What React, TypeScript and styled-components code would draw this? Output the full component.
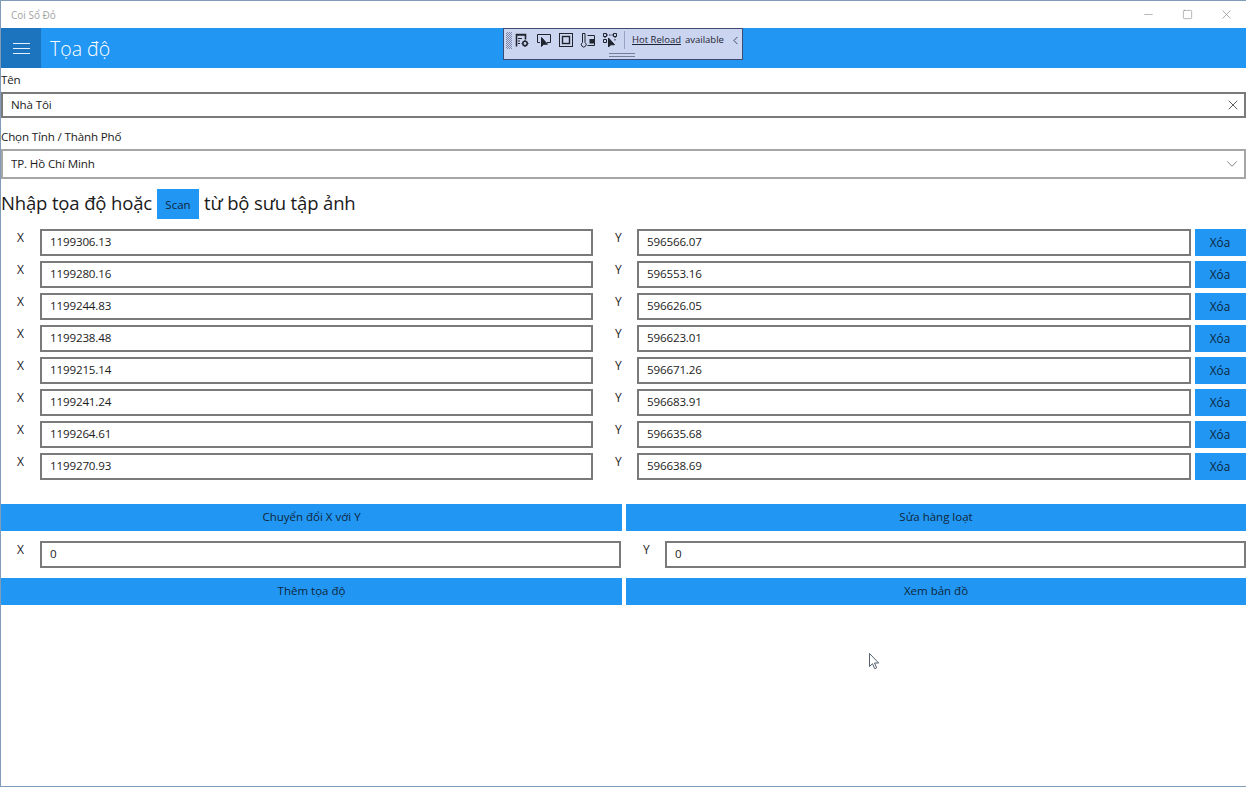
import { createGlobalStyle } from "styled-components";
import styled from "styled-components";
import { X, ChevronDown, ChevronLeft, Minus, Square } from "lucide-react";

const GlobalStyle = createGlobalStyle`
  html, body {
    margin: 0;
    padding: 0;
    background: #fff;
  }
  body {
    font-family: "Open Sans", "Noto Sans", sans-serif;
    color: #1a1a1a;
    overflow: hidden;
  }
`

const Window = styled.div`
  position: relative;
  box-sizing: border-box;
  width: 1246px;
  height: 787px;
  border-left: 1px solid #7f9db9;
  border-top: 1px solid #7f9db9;
  border-bottom: 1px solid #7f9db9;
  background: #fff;
  overflow: hidden;
`

const TitleBar = styled.div`
  display: flex;
  align-items: center;
  justify-content: space-between;
  height: 27px;
`

const TitleText = styled.span`
  font-size: 10px;
  color: #a3a3a3;
  padding-left: 10px;
`

const WindowControls = styled.div`
  display: flex;
  align-items: center;
  color: #7d7d7d;
`

const WindowControl = styled.div`
  display: flex;
  align-items: center;
  justify-content: center;
  width: 39px;
  height: 27px;
`

const Header = styled.header`
  display: flex;
  align-items: stretch;
  height: 40px;
  background: #2196f3;
`

const MenuButton = styled.div`
  display: flex;
  flex-direction: column;
  align-items: center;
  justify-content: center;
  gap: 4px;
  width: 40px;
  background: #1b74bd;
`

const MenuLine = styled.span`
  display: block;
  width: 17px;
  height: 1px;
  background: #e4f1fc;
`

const PageTitle = styled.h1`
  margin: 0;
  padding-left: 9px;
  font-size: 19.5px;
  font-weight: 300;
  line-height: 42px;
  color: #fff;
`

const Content = styled.main`
  display: flex;
  flex-direction: column;
`

const FieldLabel = styled.label<{ $top: number }>`
  display: block;
  height: 15px;
  margin-top: ${(p) => p.$top}px;
  font-size: 11.6px;
  letter-spacing: -0.15px;
  line-height: 16px;
  color: #1c1c1c;
`

const FieldBox = styled.div<{ $height: number; $light?: boolean }>`
  box-sizing: border-box;
  display: flex;
  align-items: center;
  justify-content: space-between;
  height: ${(p) => p.$height}px;
  margin-top: 5px;
  padding: 0 3px 0 8px;
  border: 2px solid ${(p) => (p.$light ? "#a6a6a6" : "#7a7a7a")};
  font-size: 11.6px;
  letter-spacing: -0.15px;
  color: #1c1c1c;
`

const BareInput = styled.input`
  flex: 1;
  min-width: 0;
  padding: 0 0 2px;
  border: 0;
  outline: 0;
  background: none;
  font: inherit;
  letter-spacing: inherit;
  color: inherit;
`

const ScanLine = styled.div`
  display: flex;
  align-items: flex-start;
  gap: 4px;
  height: 30px;
  margin-top: 10px;
  font-size: 18.5px;
  letter-spacing: -0.15px;
  line-height: 28px;
  color: #1a1a1a;
`

const ScanButton = styled.button`
  width: 42px;
  height: 30px;
  margin: 0 1px;
  padding: 0;
  border: 0;
  background: #2196f3;
  font-family: inherit;
  font-size: 11.5px;
  letter-spacing: 0;
  color: #10263a;
`

const CoordList = styled.div`
  display: flex;
  flex-direction: column;
  gap: 5px;
  margin-top: 10px;
`

const CoordRow = styled.div`
  display: grid;
  grid-template-columns: 39px 553px 44px 554px 51px;
  height: 27px;
`

const AxisLabel = styled.span`
  margin-top: 1px;
  padding-left: 16px;
  font-size: 12px;
  line-height: 16px;
  color: #1c1c1c;
`

const AxisLabelY = styled(AxisLabel)`
  padding-left: 22px;
`

const ValueInput = styled.input`
  box-sizing: border-box;
  width: 100%;
  height: 27px;
  padding: 0 8px 3px;
  border: 2px solid #7a7a7a;
  outline: 0;
  border-radius: 0;
  background: #fff;
  font-family: inherit;
  font-size: 11.6px;
  letter-spacing: -0.15px;
  color: #1c1c1c;
`

const DeleteButton = styled.button`
  width: 51px;
  height: 27px;
  margin-left: 4px;
  padding: 0 1px 2px 0;
  border: 0;
  background: #2196f3;
  font-family: inherit;
  font-size: 11.8px;
  color: #10263a;
`

const ActionRow = styled.div<{ $top: number }>`
  display: grid;
  grid-template-columns: 621px 620px;
  column-gap: 4px;
  margin-top: ${(p) => p.$top}px;
`

const ActionButton = styled.button`
  height: 27px;
  padding: 0 0 2px;
  border: 0;
  background: #2196f3;
  font-family: inherit;
  font-size: 11.5px;
  color: #10263a;
`

const SingleRow = styled.div`
  display: grid;
  grid-template-columns: 39px 581px 44px 581px;
  height: 27px;
  margin-top: 10px;
`

const ReloadBar = styled.div`
  position: absolute;
  top: 27px;
  left: 502px;
  box-sizing: border-box;
  display: flex;
  align-items: flex-start;
  width: 240px;
  height: 32px;
  padding: 2px 0 0 2px;
  border: 1px solid #3d4a74;
  background: #ccd5f0;
  color: #1e2433;
`

const Gripper = styled.span`
  flex: none;
  width: 6px;
  height: 17px;
  margin: 1px 2px 0 0;
  background: repeating-conic-gradient(#7f88a8 0 25%, transparent 0 50%) 0 0 / 2px 2px;
`

const BarIcon = styled.svg`
  flex: none;
  width: 16px;
  height: 16px;
  margin: 1px 6px 0 0;
  fill: none;
  stroke: #20242f;
  stroke-width: 1;
`

const BarSeparator = styled.span`
  flex: none;
  width: 1px;
  height: 18px;
  margin: 0 7px 0 0;
  background: #98a2c2;
`

const ReloadText = styled.span`
  font-size: 9.5px;
  line-height: 18px;
  white-space: nowrap;
  color: #1e2433;
`

const ReloadLink = styled.span`
  margin-right: 4px;
  text-decoration: underline;
`

const Collapse = styled.span`
  display: flex;
  margin: 3px 0 0 5px;
`

const BarHandle = styled.span`
  position: absolute;
  left: 105px;
  bottom: 2px;
  width: 26px;
  height: 2px;
  border-top: 1px solid #747d9e;
  border-bottom: 1px solid #747d9e;
`

const Pointer = styled.svg`
  position: absolute;
  left: 867px;
  top: 651px;
  width: 13px;
  height: 19px;
`

const rows = [
  ["1199306.13", "596566.07"],
  ["1199280.16", "596553.16"],
  ["1199244.83", "596626.05"],
  ["1199238.48", "596623.01"],
  ["1199215.14", "596671.26"],
  ["1199241.24", "596683.91"],
  ["1199264.61", "596635.68"],
  ["1199270.93", "596638.69"],
];

const App = () => {
  return (
    <Window>
      <GlobalStyle />
      <TitleBar>
        <TitleText>Coi Sổ Đỏ</TitleText>
        <WindowControls>
          <WindowControl><Minus size={13} strokeWidth={1} /></WindowControl>
          <WindowControl><Square size={11} strokeWidth={1.2} /></WindowControl>
          <WindowControl><X size={15} strokeWidth={1} /></WindowControl>
        </WindowControls>
      </TitleBar>
      <Header>
        <MenuButton>
          <MenuLine />
          <MenuLine />
          <MenuLine />
        </MenuButton>
        <PageTitle>Tọa độ</PageTitle>
      </Header>
      <Content>
        <FieldLabel $top={4}>Tên</FieldLabel>
        <FieldBox $height={26}>
          <BareInput readOnly value="Nhà Tôi" />
          <X size={16} strokeWidth={1.2} color="#333" />
        </FieldBox>
        <FieldLabel $top={11}>Chọn Tỉnh / Thành Phố</FieldLabel>
        <FieldBox $height={30} $light>
          <BareInput readOnly value="TP. Hồ Chí Minh" />
          <ChevronDown size={18} strokeWidth={1} color="#555" />
        </FieldBox>
        <ScanLine>
          Nhập tọa độ hoặc
          <ScanButton>Scan</ScanButton>
          từ bộ sưu tập ảnh
        </ScanLine>
        <CoordList>
          {rows.map(([x, y]) => (
            <CoordRow key={x}>
              <AxisLabel>X</AxisLabel>
              <ValueInput readOnly value={x} />
              <AxisLabelY>Y</AxisLabelY>
              <ValueInput readOnly value={y} />
              <DeleteButton>Xóa</DeleteButton>
            </CoordRow>
          ))}
        </CoordList>
        <ActionRow $top={24}>
          <ActionButton>Chuyển đổi X với Y</ActionButton>
          <ActionButton>Sửa hàng loạt</ActionButton>
        </ActionRow>
        <SingleRow>
          <AxisLabel>X</AxisLabel>
          <ValueInput readOnly value="0" />
          <AxisLabelY>Y</AxisLabelY>
          <ValueInput readOnly value="0" />
        </SingleRow>
        <ActionRow $top={10}>
          <ActionButton>Thêm tọa độ</ActionButton>
          <ActionButton>Xem bản đồ</ActionButton>
        </ActionRow>
      </Content>
      <ReloadBar>
        <Gripper />
        <BarIcon viewBox="0 0 16 16">
          <path d="M2.5 14.5v-12h9v5M2 3h10" strokeWidth="1.6" />
          <path d="M4 6.5h4M4 9h2M4 11.5h2" />
          <circle cx="11" cy="11.5" r="2.2" strokeWidth="1.6" />
          <path d="M11 8v1M11 14v1M7.5 11.5h1M13.5 11.5h1" />
        </BarIcon>
        <BarIcon viewBox="0 0 16 16">
          <path d="M4 10.5H1.5v-8h13v8H11" />
          <path d="M5.5 5.5v9l2.2-2.2 3.8-.1z" fill="#20242f" />
        </BarIcon>
        <BarIcon viewBox="0 0 16 16">
          <rect x="1.5" y="1.5" width="13" height="13" />
          <rect x="4.5" y="4.5" width="7" height="7" strokeWidth="1.4" />
        </BarIcon>
        <BarIcon viewBox="0 0 16 16">
          <path d="M2.5 1.5h2.5v9a2.4 2.4 0 1 1-2.5 0z" />
          <path d="M7.5 3.5h7v10h-7" />
          <rect x="10" y="7.5" width="3.5" height="3.5" fill="#20242f" />
        </BarIcon>
        <BarIcon viewBox="0 0 16 16">
          <path d="M1.5 1.5h3v3h-3zM11.5 1.5h3v3h-3zM1.5 7.5h3v3h-3z" />
          <path d="M4.5 3h7M3 4.5v3M13 4.5v5" strokeDasharray="1.5 1" />
          <path d="M6.5 6v9l2.2-2.2 3.8-.1z" fill="#20242f" />
        </BarIcon>
        <BarSeparator />
        <ReloadText>
          <ReloadLink>Hot Reload</ReloadLink>available
        </ReloadText>
        <Collapse><ChevronLeft size={13} strokeWidth={1.6} color="#2a3350" /></Collapse>
        <BarHandle />
      </ReloadBar>
      <Pointer viewBox="0 0 13 19">
        <path d="M1.5 1.5v13l3-2.8 2.2 5 2-.9-2.2-4.8h4.2z" fill="#fff" stroke="#55606b" strokeWidth="1" />
      </Pointer>
    </Window>
  );
};

export default App;
